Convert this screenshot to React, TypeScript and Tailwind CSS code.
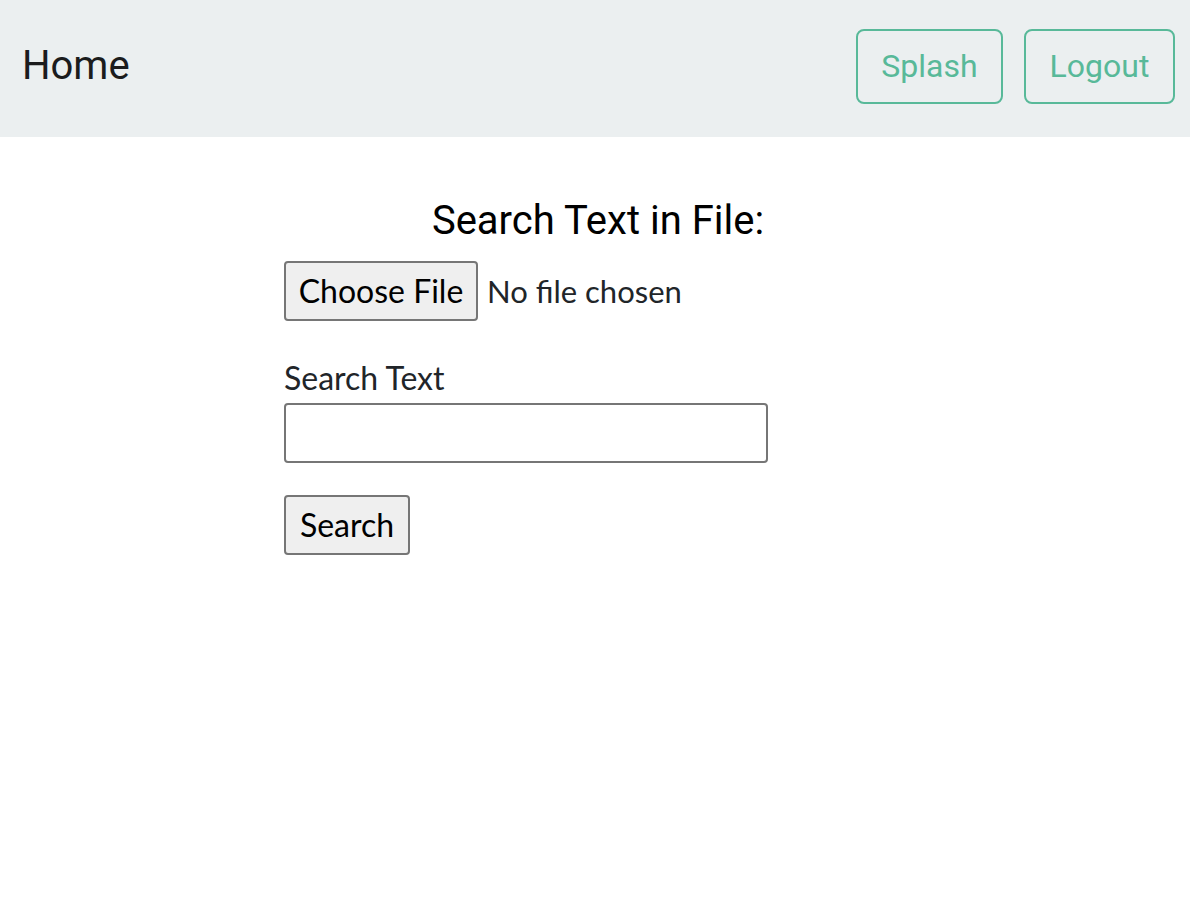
import React from "react";

export default function App() {
  return (
    <div className="min-h-[918px] w-[1190px] bg-white">
      <header className="flex h-[137px] items-center justify-between bg-[#ebeff0] pb-[5px] pl-[22px] pr-[15px]">
        <span className="text-[40px] leading-none text-[#1b1c1d]" style={{ fontFamily: "Roboto, sans-serif" }}>
          Home
        </span>
        <div className="flex gap-[21px]" style={{ fontFamily: "Roboto, sans-serif" }}>
          <button className="h-[75px] w-[147px] rounded-[8px] border-2 border-[#58b999] text-[32px] text-[#58b999]">
            Splash
          </button>
          <button className="h-[75px] w-[151px] rounded-[8px] border-2 border-[#58b999] text-[32px] text-[#58b999]">
            Logout
          </button>
        </div>
      </header>
      <main className="flex flex-col items-center pt-[60px]">
        <h3 className="ml-[6px] text-[40px] leading-[48px] text-black" style={{ fontFamily: "Roboto, sans-serif" }}>
          Search Text in File:
        </h3>
        <div className="mt-[16px] flex w-[622px] flex-col" style={{ fontFamily: "Lato, sans-serif" }}>
          <div className="flex items-center gap-[9px]">
            <button className="h-[60px] w-[194px] rounded-[4px] border-2 border-[#767676] bg-[#efefef] text-[32px] text-black">
              Choose File
            </button>
            <span className="text-[31px] text-[#212529]">No file chosen</span>
          </div>
          <label className="mt-[33px] text-[32px] leading-[48px] text-[#212529]">Search Text</label>
          <input className="mt-[1px] h-[60px] w-[484px] rounded-[4px] border-2 border-[#767676] bg-white" />
          <button className="mt-[32px] h-[60px] w-[126px] rounded-[4px] border-2 border-[#767676] bg-[#efefef] text-[32px] text-black">
            Search
          </button>
        </div>
      </main>
    </div>
  );
}
